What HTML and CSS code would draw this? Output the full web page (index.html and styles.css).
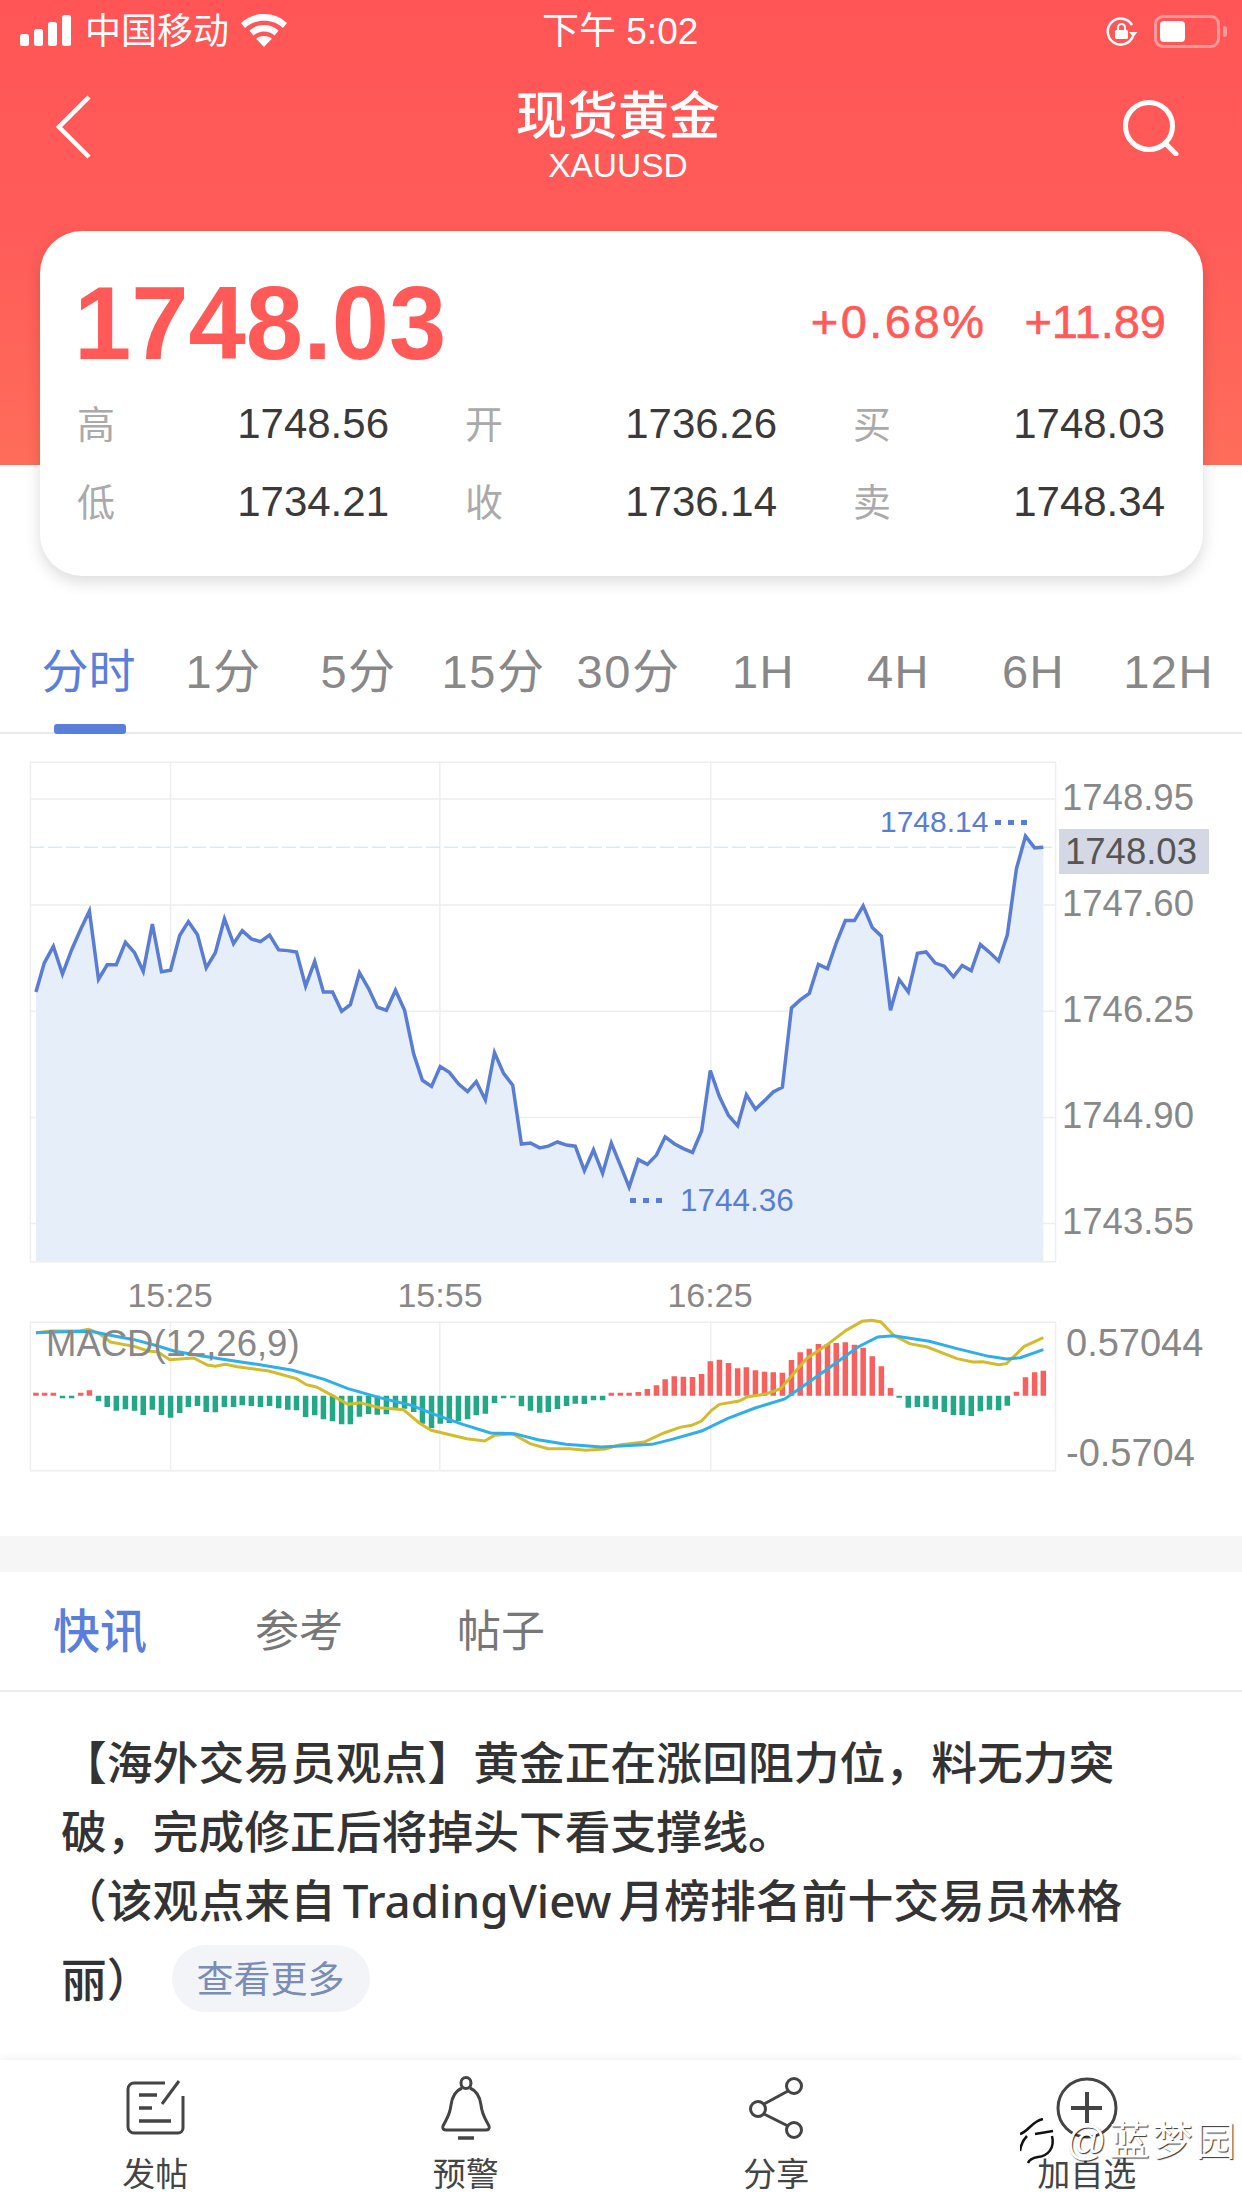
FILE: index.html
```html
<!DOCTYPE html>
<html lang="zh-CN">
<head>
    <meta charset="UTF-8">
    <meta name="viewport" content="width=device-width, initial-scale=1.0">
    <title>现货黄金 XAUUSD</title>
    <link rel="stylesheet" href="styles.css">
</head>
<body>

    <header class="header">
        <div class="status-bar">
            <div class="status-left">
                <svg class="signal" width="52" height="32" viewBox="0 0 52 32" fill="#fff">
                    <rect x="0" y="19" width="9" height="12" rx="2.5"/>
                    <rect x="14" y="14" width="9" height="17" rx="2.5"/>
                    <rect x="28" y="7" width="9" height="24" rx="2.5"/>
                    <rect x="42" y="0" width="9" height="31" rx="2.5"/>
                </svg>
                <span class="carrier">中国移动</span>
                <svg class="wifi" width="46" height="33" viewBox="0 0 46 33" fill="#fff">
                    <path d="M23 0C14 0 6.500 3 0 9l4 5c5.500-4.800 11.500-7.200 19-7.200s13.500 2.400 19 7.200l4-5C39.500 3 32 0 23 0z"/>
                    <path d="M23 11c-6 0-10.500 2-14.600 5.500l4 5C15.400 19 19 17.600 23 17.600s7.600 1.400 10.600 3.900l4-5C33.500 13 29 11 23 11z"/>
                    <path d="M23 22c-3.400 0-5.800 1-7.800 2.800L23 33l7.800-8.200C28.800 23 26.400 22 23 22z"/>
                </svg>
            </div>
            <div class="status-time">下午 5:02</div>
            <div class="status-right">
                <svg width="32" height="30" viewBox="0 0 32 30" fill="none" stroke="#fff" stroke-width="2.500">
                    <path d="M27 19a13 13 0 1 1-1-11"/>
                    <path d="M23 15l4.500 5 4-5z" fill="#fff" stroke="none"/>
                    <rect x="9" y="13" width="13" height="9" rx="1.500" fill="#fff" stroke="none"/>
                    <path d="M12 13v-2.500a3.500 3.500 0 0 1 7 0V13" stroke-width="2"/>
                </svg>
                <div class="battery"><div class="battery-level"></div></div>
            </div>
        </div>
        <div class="nav-bar">
            <svg class="nav-back" width="36" height="64" viewBox="0 0 36 64" fill="none" stroke="#fff" stroke-width="4.500">
                <path d="M33 2L3 32l30 30"/>
            </svg>
            <div class="nav-title">
                <h1>现货黄金</h1>
                <p>XAUUSD</p>
            </div>
            <svg class="nav-search" width="58" height="56" viewBox="0 0 58 56" fill="none" stroke="#fff" stroke-width="5">
                <circle cx="27" cy="26" r="23.500"/>
                <path d="M43 43l11 11" stroke-linecap="round"/>
            </svg>
        </div>
    </header>

    <section class="quote-card">
        <div class="quote-top">
            <div class="price">1748.03</div>
            <div class="change">
                <span class="change-pct">+0.68%</span>
                <span>+11.89</span>
            </div>
        </div>
        <div class="quote-grid">
            <div class="quote-cell"><span>高</span><b>1748.56</b></div>
            <div class="quote-cell"><span>开</span><b>1736.26</b></div>
            <div class="quote-cell"><span>买</span><b>1748.03</b></div>
            <div class="quote-cell"><span>低</span><b>1734.21</b></div>
            <div class="quote-cell"><span>收</span><b>1736.14</b></div>
            <div class="quote-cell"><span>卖</span><b>1748.34</b></div>
        </div>
    </section>

    <nav class="period-tabs">
        <div class="period-tab active">分时</div>
        <div class="period-tab">1分</div>
        <div class="period-tab">5分</div>
        <div class="period-tab">15分</div>
        <div class="period-tab">30分</div>
        <div class="period-tab">1H</div>
        <div class="period-tab">4H</div>
        <div class="period-tab">6H</div>
        <div class="period-tab">12H</div>
    </nav>

    <section class="chart">
        <div class="chart-row chart-row-main">
            <div class="plot plot-main">
                <!-- coordinates: 2.525 units per px across, 2.904 units per px down -->
                <svg width="1026" height="500" viewBox="77 65 2591 1450" preserveAspectRatio="none">
                    <path class="grid" d="M77 66H2668M77 172H2668M77 480H2668M77 788H2668M77 1096H2668M77 1403H2668M77 1514H2668M78 65V1515M2667 65V1515M432 65V1515M1112 65V1515M1796 65V1515"/>
                    <polygon class="area" points="92,1512 92,732 113,648 136,600 159,680 182,610 205,550 227,497 250,695 272,653 295,653 318,588 341,618 363,672 386,535 409,673 432,669 455,568 477,528 500,566 522,662 545,618 568,520 591,592 613,554 636,578 659,586 682,567 705,610 728,612 750,616 773,715 796,643 818,732 841,732 864,788 886,769 909,676 932,722 954,776 977,785 1000,727 1023,785 1046,912 1068,988 1091,1006 1113,948 1136,965 1159,998 1182,1021 1204,992 1227,1045 1250,908 1273,968 1296,1002 1318,1173 1341,1170 1364,1184 1386,1179 1409,1167 1432,1176 1454,1179 1477,1250 1500,1190 1523,1258 1545,1170 1568,1235 1590,1298 1613,1218 1636,1232 1659,1205 1681,1152 1704,1172 1727,1186 1750,1197 1773,1135 1795,960 1818,1035 1841,1090 1864,1120 1886,1030 1909,1072 1932,1047 1954,1022 1977,1008 2000,778 2022,755 2045,736 2068,652 2091,664 2113,590 2136,525 2159,525 2181,482 2204,545 2227,570 2250,785 2272,696 2295,732 2318,620 2340,616 2363,648 2386,657 2409,688 2431,655 2454,670 2477,594 2500,617 2523,642 2545,567 2568,375 2591,280 2614,314 2636,312 2636,1512"/>
                    <path class="last-price" d="M77 312H2668"/>
                    <polyline class="price-line" points="92,732 113,648 136,600 159,680 182,610 205,550 227,497 250,695 272,653 295,653 318,588 341,618 363,672 386,535 409,673 432,669 455,568 477,528 500,566 522,662 545,618 568,520 591,592 613,554 636,578 659,586 682,567 705,610 728,612 750,616 773,715 796,643 818,732 841,732 864,788 886,769 909,676 932,722 954,776 977,785 1000,727 1023,785 1046,912 1068,988 1091,1006 1113,948 1136,965 1159,998 1182,1021 1204,992 1227,1045 1250,908 1273,968 1296,1002 1318,1173 1341,1170 1364,1184 1386,1179 1409,1167 1432,1176 1454,1179 1477,1250 1500,1190 1523,1258 1545,1170 1568,1235 1590,1298 1613,1218 1636,1232 1659,1205 1681,1152 1704,1172 1727,1186 1750,1197 1773,1135 1795,960 1818,1035 1841,1090 1864,1120 1886,1030 1909,1072 1932,1047 1954,1022 1977,1008 2000,778 2022,755 2045,736 2068,652 2091,664 2113,590 2136,525 2159,525 2181,482 2204,545 2227,570 2250,785 2272,696 2295,732 2318,620 2340,616 2363,648 2386,657 2409,688 2431,655 2454,670 2477,594 2500,617 2523,642 2545,567 2568,375 2591,280 2614,314 2636,312"/>
                </svg>
                <div class="mark mark-high"><span>1748.14</span><i></i><i></i><i></i></div>
                <div class="mark mark-low"><i></i><i></i><i></i><span>1744.36</span></div>
            </div>
            <div class="axis">
                <div>1748.95</div>
                <div>1747.60</div>
                <div>1746.25</div>
                <div>1744.90</div>
                <div>1743.55</div>
                <div class="axis-tag">1748.03</div>
            </div>
        </div>

        <div class="time-row">
            <div>15:25</div>
            <div>15:55</div>
            <div>16:25</div>
        </div>

        <div class="chart-row chart-row-macd">
            <div class="plot plot-macd">
                <!-- same x units as the price chart, 3 units per px down -->
                <svg width="1026" height="149" viewBox="77 125 2591 447" preserveAspectRatio="none">
                    <path class="grid" d="M77 126H2668M77 571H2668M78 125V572M2667 125V572M432 125V572M1112 125V572M1796 125V572"/>
                    <path class="bars-green" d="M159 346V354M182 346V354M250 346V363M272 346V380M295 346V391M318 346V387M341 346V391M363 346V404M386 346V388M409 346V404M432 346V412M455 346V398M477 346V380M500 346V377M522 346V395M545 346V396M568 346V380M591 346V380M613 346V375M636 346V377M659 346V380M682 346V377M705 346V384M728 346V388M750 346V390M773 346V410M796 346V405M818 346V417M841 346V423M864 346V432M886 346V432M909 346V409M932 346V401M954 346V403M977 346V402M1000 346V385M1023 346V385M1046 346V395M1068 346V430M1091 346V443M1113 346V430M1136 346V428M1159 346V422M1182 346V417M1204 346V405M1227 346V400M1250 346V368M1273 346V354M1296 346V352M1318 346V378M1341 346V391M1364 346V397M1386 346V395M1409 346V386M1432 346V377M1454 346V370M1477 346V371M1500 346V360M1523 346V360M2272 346V352M2295 346V382M2318 346V380M2340 346V380M2363 346V387M2386 346V395M2409 346V404M2431 346V404M2454 346V407M2477 346V393M2500 346V388M2523 346V390M2545 346V376"/>
                    <path class="bars-red" d="M92 337V346M114 337V346M136 337V346M205 337V346M227 330V346M1545 337V346M1568 337V346M1590 337V346M1613 335V346M1636 326V346M1659 315V346M1681 297V346M1704 288V346M1727 289V346M1750 290V346M1773 281V346M1795 243V346M1818 238V346M1841 248V346M1864 264V346M1886 261V346M1909 270V346M1932 274V346M1954 276V346M1977 277V346M2000 239V346M2022 216V346M2045 205V346M2068 191V346M2091 191V346M2113 188V346M2136 186V346M2159 193V346M2181 202V346M2204 228V346M2227 258V346M2250 323V346M2568 334V346M2591 291V346M2614 276V346M2636 271V346"/>
                    <polyline class="dea-line" points="92,157 130,152 200,152 225,147 250,158 280,185 340,198 375,212 400,215 430,238 490,233 525,254 545,258 570,252 600,259 680,272 750,295 775,313 800,320 840,345 880,372 910,367 960,382 1020,388 1060,428 1090,450 1180,475 1225,482 1250,465 1295,460 1340,490 1385,505 1440,505 1480,510 1530,506 1568,493 1628,485 1678,458 1718,441 1748,435 1773,422 1798,390 1818,372 1868,362 1888,350 1938,340 1973,325 1998,290 2038,235 2088,195 2138,150 2178,123 2203,120 2226,125 2258,165 2298,190 2343,200 2418,235 2458,245 2483,244 2523,253 2543,250 2588,198 2636,172"/>
                    <polyline class="dif-line" points="92,157 140,155 230,153 280,165 340,178 400,197 440,212 500,225 560,236 640,250 740,270 820,297 880,325 960,352 1040,375 1100,403 1170,432 1240,458 1300,460 1360,478 1430,492 1520,500 1568,497 1648,492 1698,477 1773,452 1838,415 1908,383 1983,356 2038,310 2098,260 2168,200 2218,170 2258,166 2348,183 2418,205 2498,228 2543,236 2578,232 2636,208"/>
                </svg>
                <div class="macd-title">MACD(12,26,9)</div>
            </div>
            <div class="axis axis-macd">
                <div>0.57044</div>
                <div>-0.5704</div>
            </div>
        </div>
    </section>

    <div class="divider-band"></div>

    <nav class="news-tabs">
        <div class="news-tab active">快讯</div>
        <div class="news-tab">参考</div>
        <div class="news-tab">帖子</div>
    </nav>

    <article class="news-body">
        <p>【海外交易员观点】黄金正在涨回阻力位，料无力突破，完成修正后将掉头下看支撑线。<br>（该观点来自 TradingView 月榜排名前十交易员林格丽）<a class="more-btn">查看更多</a></p>
    </article>

    <footer class="tool-bar">
        <div class="tool">
            <svg width="60" height="60" viewBox="0 0 60 60" fill="none" stroke="#444" stroke-width="3">
                <path d="M40 5H9a6 6 0 0 0-6 6v38a6 6 0 0 0 6 6h44a5 5 0 0 0 5-5V18"/>
                <path d="M37 26L54 3"/>
                <path d="M14 17h18M14 30h13M14 43h32" stroke-width="3.500"/>
            </svg>
            <span>发帖</span>
        </div>
        <div class="tool">
            <svg width="60" height="64" viewBox="0 0 60 64" fill="none" stroke="#444" stroke-width="3">
                <ellipse cx="30" cy="7" rx="5" ry="5.500"/>
                <path d="M26 12c-7 3-10 9-11 17-1 10-5 15-8 21-1 3 1 4 3 4h40c2 0 4-1 3-4-3-6-7-11-8-21-1-8-4-14-11-17"/>
                <path d="M22 62h16" stroke-width="3.500"/>
            </svg>
            <span>预警</span>
        </div>
        <div class="tool">
            <svg width="60" height="64" viewBox="0 0 60 64" fill="none" stroke="#444" stroke-width="3">
                <circle cx="48" cy="10" r="7.500"/>
                <circle cx="12" cy="33" r="7.500"/>
                <circle cx="48" cy="54" r="7.500"/>
                <path d="M42 15L18 28M18 38l24 12"/>
            </svg>
            <span>分享</span>
        </div>
        <div class="tool">
            <svg width="62" height="64" viewBox="0 0 62 64" fill="none" stroke="#444" stroke-width="3">
                <circle cx="31" cy="32" r="29"/>
                <path d="M31 16v31M15 32h31" stroke-width="4"/>
            </svg>
            <span>加自选</span>
        </div>
        <div class="watermark">
            <svg width="36" height="46" viewBox="0 0 36 46" fill="none" stroke="#111" stroke-width="2.500">
                <path d="M0 16C8 14 12 3 23 1"/>
                <path d="M0 33C1 26 4 21 7 18"/>
                <path d="M15 16L33 13"/>
                <path d="M32 18C35 30 28 38 18 39C12 40 9 42 8 45"/>
            </svg>
            <span>@蓝梦园</span>
        </div>
    </footer>

</body>
</html>
```

FILE: styles.css
```css
* {
    box-sizing: border-box;
}

body {
    margin: 0;
    width: 1242px;
    height: 2208px;
    overflow: hidden;
    background: #fff;
    font-family: "Liberation Sans", "Noto Sans CJK SC", sans-serif;
    color: #333;
}

h1, p {
    margin: 0;
}

/* header */
.header {
    height: 465px;
    background: linear-gradient(180deg, #ff5556 0%, #ff5c59 50%, #ff6d5a 100%);
    color: #fff;
}

.status-bar {
    display: flex;
    justify-content: space-between;
    align-items: center;
    height: 62px;
    padding: 2px 22px 0 20px;
    position: relative;
}

.status-left {
    display: flex;
    align-items: center;
}

.signal {
    margin-top: -2px;
}

.carrier {
    font-size: 36px;
    line-height: 62px;
    margin-left: 13px;
}

.wifi {
    margin-left: 12px;
    margin-top: -4px;
}

.status-time {
    position: absolute;
    left: 542px;
    top: 1px;
    font-size: 37px;
    line-height: 62px;
}

.status-right {
    display: flex;
    align-items: center;
    gap: 16px;
}

.battery {
    position: relative;
    width: 66px;
    height: 33px;
    margin-top: -2px;
    padding: 3px;
    border: 3px solid rgba(255, 255, 255, 0.4);
    border-radius: 9px;
}

.battery::after {
    content: "";
    position: absolute;
    right: -10px;
    top: 8px;
    width: 4px;
    height: 11px;
    border-radius: 0 3px 3px 0;
    background: rgba(255, 255, 255, 0.4);
}

.battery-level {
    width: 25px;
    height: 100%;
    border-radius: 4px;
    background: #fff;
}

.nav-bar {
    display: grid;
    grid-template-columns: 1fr auto 1fr;
    align-items: center;
    height: 130px;
    padding: 0 62px 0 56px;
}

.nav-search {
    justify-self: end;
    margin-top: 2px;
}

.nav-title {
    align-self: start;
    margin-top: 23px;
    text-align: center;
}

.nav-title h1 {
    font-size: 51px;
    font-weight: 500;
    line-height: 64px;
}

.nav-title p {
    margin-top: -3px;
    font-size: 33.500px;
    line-height: 40px;
}

/* quote card */
.quote-card {
    position: relative;
    height: 345px;
    margin: -234px 39px 0 40px;
    padding: 50px 37px 0;
    border-radius: 42px;
    background: #fff;
    box-shadow: 0 6px 16px rgba(0, 0, 0, 0.14);
}

.quote-top {
    display: flex;
    justify-content: space-between;
    align-items: center;
    height: 86px;
    color: #ff5a58;
}

.price {
    margin-left: -3px;
    font-size: 103px;
    font-weight: bold;
}

.change {
    display: flex;
    gap: 38px;
    margin-top: -5px;
    font-size: 47px;
    -webkit-text-stroke: 0.6px #ff5a58;
}

.change-pct {
    letter-spacing: 2.500px;
}

.quote-grid {
    display: grid;
    grid-template-columns: repeat(3, 312px);
    column-gap: 76px;
    margin-top: 18px;
}

.quote-cell {
    display: flex;
    justify-content: space-between;
    align-items: center;
    height: 78px;
}

.quote-cell span {
    margin-top: -5px;
    font-size: 38px;
    color: #aaa;
}

.quote-cell b {
    font-size: 42px;
    font-weight: normal;
    color: #3a3a3a;
}

/* period tabs */
.period-tabs {
    display: flex;
    height: 102px;
    margin-top: 56px;
    padding-left: 21px;
    border-bottom: 2px solid #e9e9ee;
}

.period-tab {
    position: relative;
    width: 135px;
    height: 100px;
    font-size: 47px;
    letter-spacing: 1.500px;
    line-height: 80px;
    text-align: center;
    color: #888;
}

.period-tab.active {
    letter-spacing: 0;
    color: #5a7fdb;
}

.period-tab.active::after {
    content: "";
    position: absolute;
    left: 33px;
    bottom: -2px;
    width: 72px;
    height: 10px;
    border-radius: 3px;
    background: #5a7fdb;
}

/* chart */
.chart {
    margin-top: 28px;
}

.chart-row {
    display: flex;
    padding-left: 30px;
}

.chart-row-main {
    height: 500px;
}

.chart-row-macd {
    height: 149px;
}

.plot {
    position: relative;
    width: 1026px;
    flex-shrink: 0;
}

.plot svg {
    display: block;
    overflow: visible;
}

.plot svg * {
    vector-effect: non-scaling-stroke;
    fill: none;
}

.plot .grid {
    stroke: #eeeef0;
    stroke-width: 1.500px;
}

.plot .area {
    fill: #e6eef9;
}

.plot .last-price {
    stroke: #c6e2ee;
    stroke-width: 1px;
    stroke-dasharray: 14 4;
}

.plot .price-line {
    stroke: #5a7dd4;
    stroke-width: 3.500px;
}

.plot .bars-green {
    stroke: #22a887;
    stroke-width: 5.500px;
}

.plot .bars-red {
    stroke: #f7605c;
    stroke-width: 5.500px;
}

.plot .dea-line {
    stroke: #d4bb2c;
    stroke-width: 3px;
}

.plot .dif-line {
    stroke: #2eaeea;
    stroke-width: 3px;
}

.mark {
    position: absolute;
    display: flex;
    align-items: center;
    gap: 5px;
    font-size: 30px;
    line-height: 36px;
    color: #5a7dd4;
}

.mark i {
    width: 6px;
    height: 5px;
    margin-right: 2px;
    background: #5a7dd4;
}

.mark-high {
    left: 850px;
    top: 42px;
}

.mark-high span {
    margin-right: 2px;
}

.mark-low {
    left: 600px;
    top: 420px;
    font-size: 31.500px;
}

.mark-low span {
    margin-left: 11px;
}

.axis {
    position: relative;
    padding: 10px 0 0 6px;
    font-size: 36.500px;
    color: #888;
}

.axis > div {
    height: 106px;
    line-height: 52px;
}

.axis-tag {
    position: absolute;
    left: 3px;
    top: 67px;
    width: 150px;
    height: 45px !important;
    padding-left: 6px;
    line-height: 45px !important;
    background: #d3d8e4;
    color: #555;
}

.axis-macd {
    padding: 0 0 0 10px;
    font-size: 38px;
}

.axis-macd > div {
    height: 110px;
    line-height: 42px;
}

.time-row {
    display: flex;
    height: 60px;
    padding: 7px 0 0 35px;
    font-size: 34px;
    color: #888;
}

.time-row div {
    width: 270px;
    line-height: 52px;
    text-align: center;
}

.macd-title {
    position: absolute;
    left: 16px;
    top: 1px;
    font-size: 36.500px;
    line-height: 42px;
    color: #888;
}

/* news */
.divider-band {
    height: 36px;
    margin-top: 65px;
    background: #f6f6f6;
}

.news-tabs {
    display: flex;
    height: 120px;
    padding-left: 53px;
    border-bottom: 2px solid #ececec;
}

.news-tab {
    width: 202px;
    font-size: 44px;
    line-height: 120px;
    color: #777;
}

.news-tab.active {
    font-size: 47px;
    font-weight: 500;
    color: #5a7fdb;
}

.news-body {
    height: 368px;
    padding: 36px 100px 0 61px;
    font-family: "Noto Sans", "Noto Sans CJK SC", sans-serif;
    font-size: 45.800px;
    font-weight: 500;
    word-spacing: -5px;
    line-height: 69px;
    color: #333;
}

.more-btn {
    display: inline-block;
    height: 67px;
    margin: 10px 0 0 19px;
    padding: 0 25px;
    border-radius: 34px;
    background: #f3f4f8;
    font-size: 37px;
    font-weight: 400;
    line-height: 67px;
    color: #7a8db5;
    vertical-align: 4px;
}

/* bottom tools */
.tool-bar {
    position: relative;
    display: grid;
    grid-template-columns: repeat(4, 1fr);
    height: 148px;
    padding-top: 16px;
    box-shadow: 0 -2px 8px rgba(0, 0, 0, 0.06);
}

.tool {
    display: flex;
    flex-direction: column;
    align-items: center;
    font-size: 33px;
    color: #444;
}

.tool svg {
    height: 64px;
}

.tool span {
    margin-top: 12px;
    line-height: 46px;
}

.watermark {
    position: absolute;
    left: 1020px;
    top: 58px;
    display: flex;
    align-items: center;
    gap: 10px;
    font-size: 40px;
    letter-spacing: 3px;
    line-height: 46px;
    white-space: nowrap;
    color: #fff;
    text-shadow: 1px 1px 1px rgba(0, 0, 0, 0.8);
}

.watermark svg {
    flex-shrink: 0;
}
```
